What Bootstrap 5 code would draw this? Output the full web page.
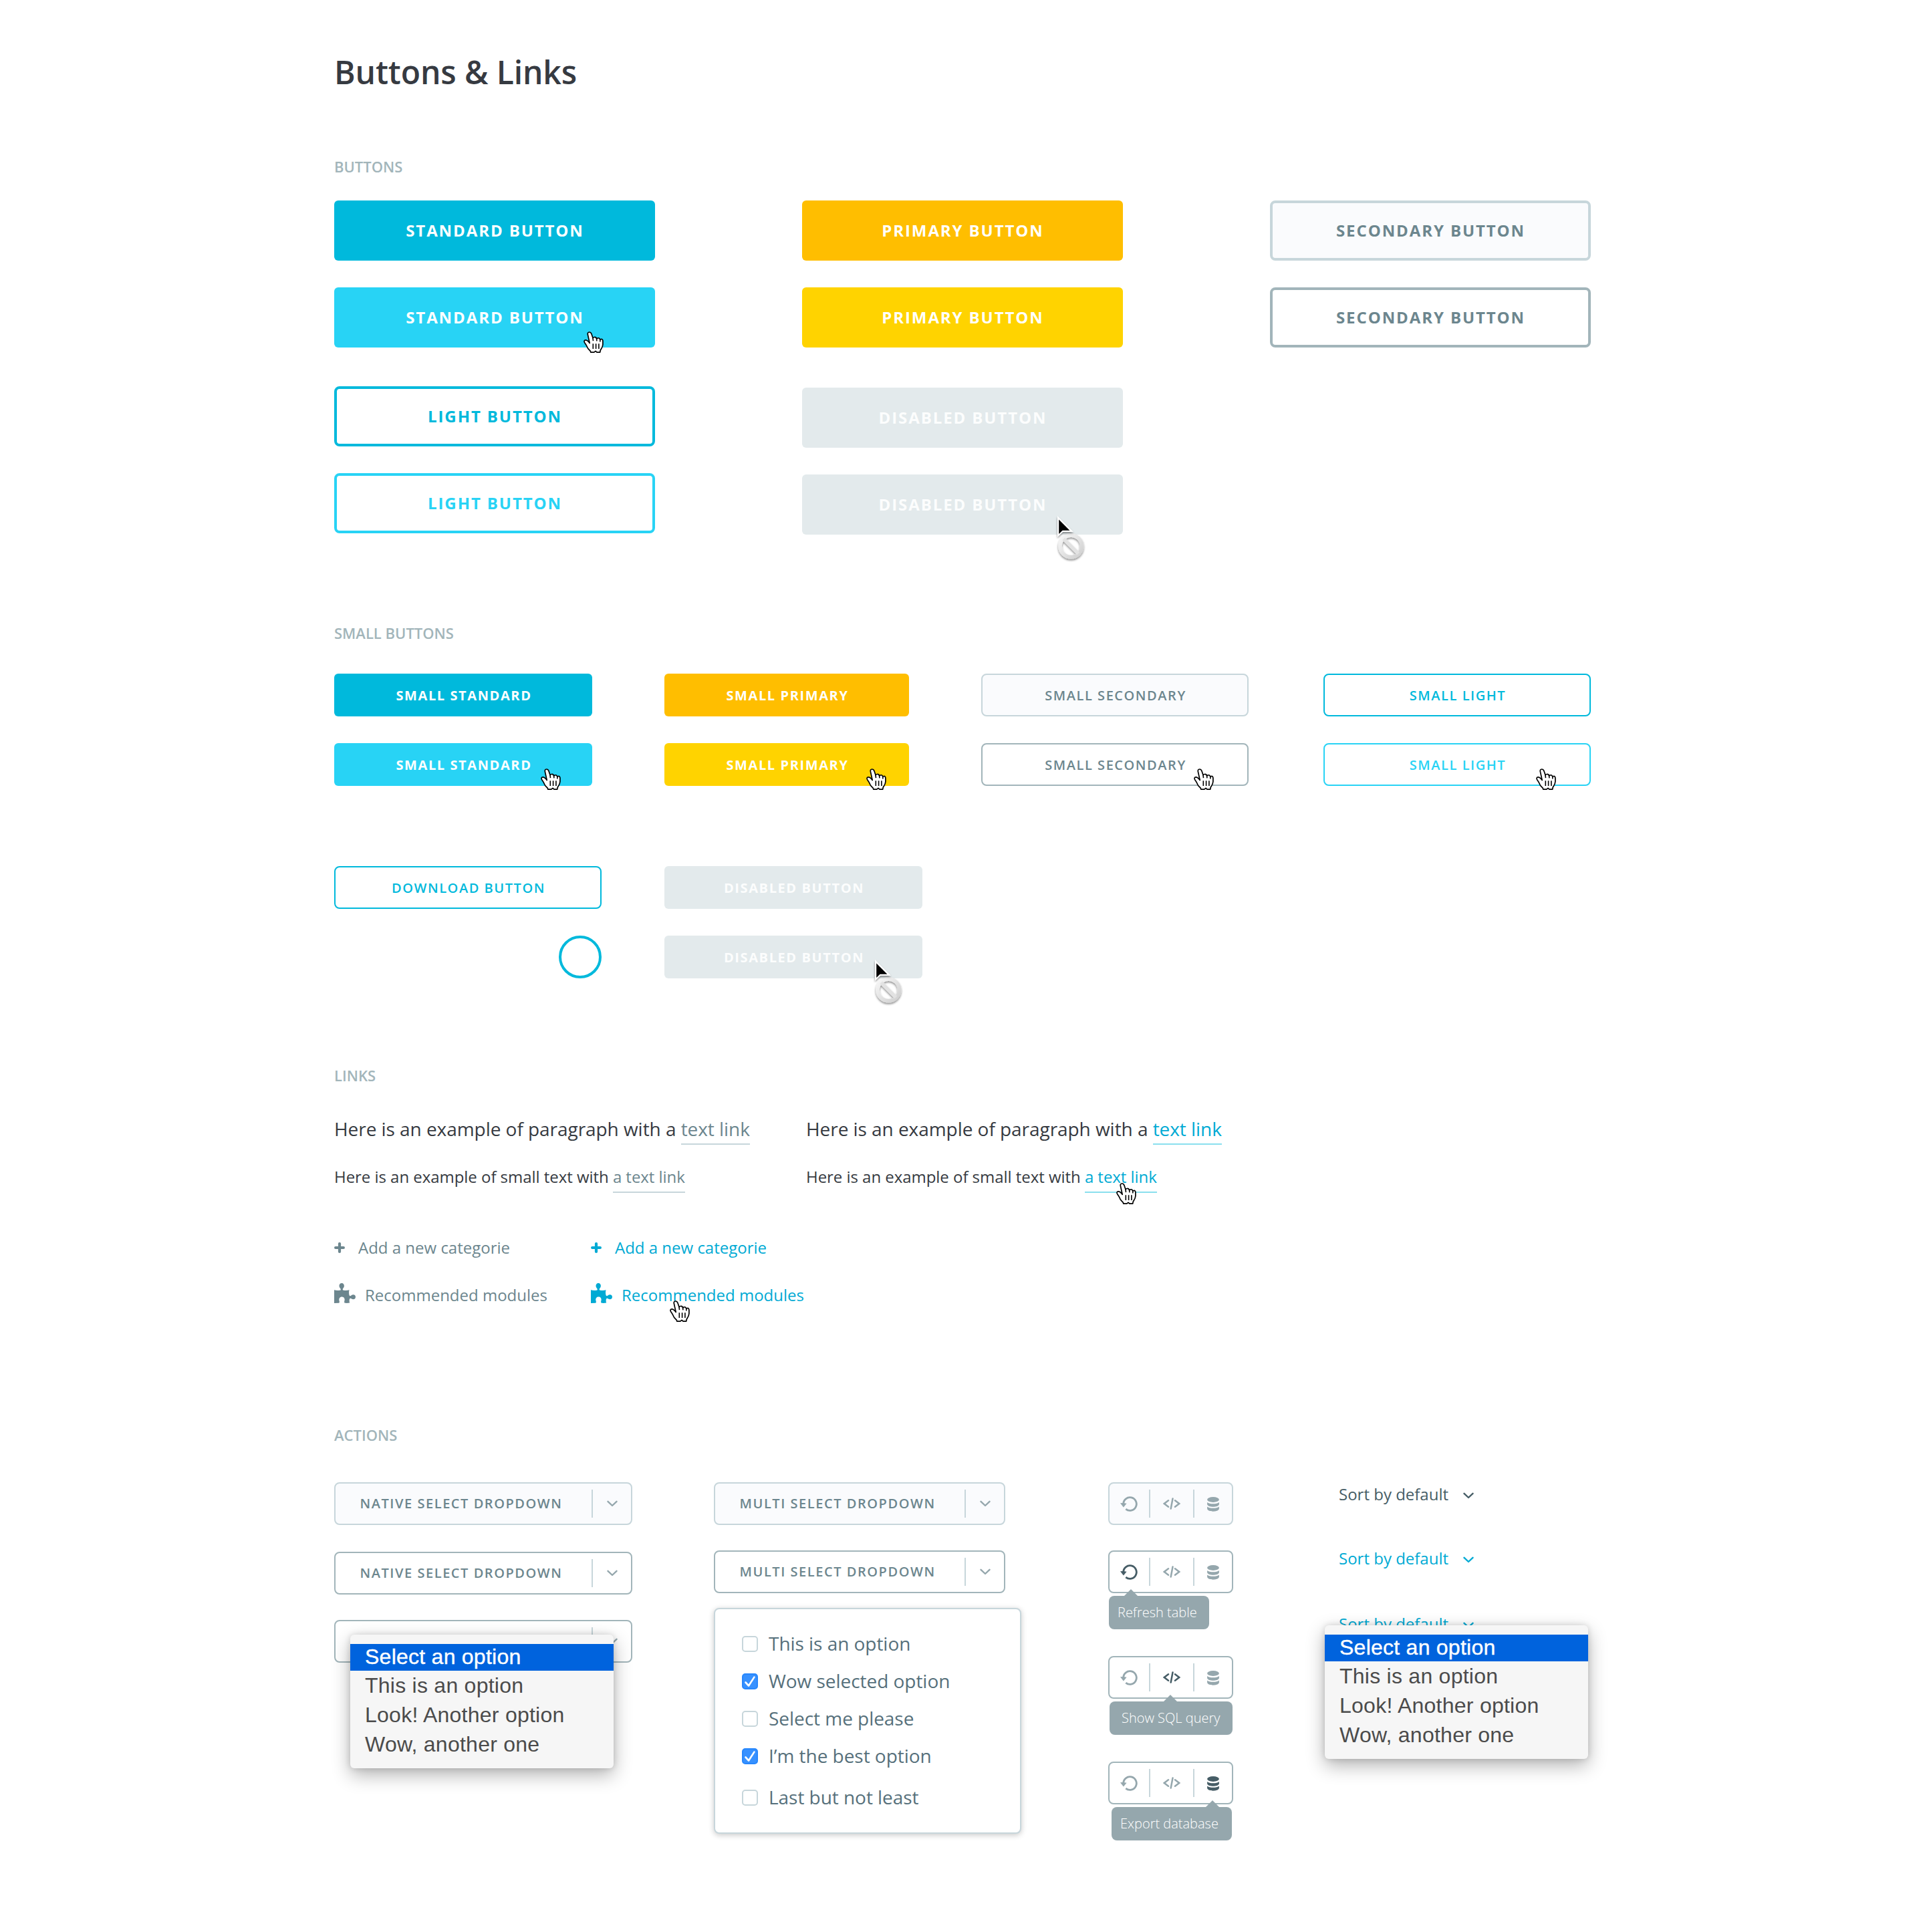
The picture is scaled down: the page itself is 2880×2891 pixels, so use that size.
<!DOCTYPE html>
<html lang="en">
<head>
<meta charset="utf-8">
<meta name="viewport" content="width=device-width, initial-scale=1">
<title>Buttons &amp; Links</title>
<link href="https://cdn.jsdelivr.net/npm/bootstrap@5.3.0/dist/css/bootstrap.min.css" rel="stylesheet">
<style>
  :root {
    --kit-cyan: #00b9dc; --kit-cyan-hover: #28d3f5;
    --kit-yellow: #ffbe00; --kit-yellow-hover: #ffd300;
    --kit-slate: #6c868e; --kit-line: #c7d6db; --kit-line-hover: #a2b5ba;
    --kit-pale: #fafbfd; --kit-link: #00aad4; --kit-ink: #363a41; --kit-dark: #465d66;
  }
  body { font-family: "Open Sans", "Noto Sans", sans-serif; color: var(--kit-ink); background: #fff; }
  .sheet { width: 1880px; min-height: 2891px; margin-left: 500px; padding-top: 76px; }
  .sheet-title { font-size: 48px; font-weight: 600; line-height: 64px; margin: 0; letter-spacing: -.1px; }
  .sheet-label { font-size: 22px; font-weight: 600; line-height: 30px; margin: 0; color: var(--kit-line-hover); text-transform: uppercase; }

  /* Buttons */
  .btn.kit {
    --bs-btn-padding-x: 0; --bs-btn-padding-y: 0; --bs-btn-border-radius: 6px; --bs-btn-border-width: 0;
    --bs-btn-font-size: 24px; --bs-btn-font-weight: 700; --bs-btn-line-height: 1;
    width: 480px; height: 90px; letter-spacing: 1.9px; text-transform: uppercase; padding-left: 1px;
    display: flex; align-items: center; justify-content: center; position: relative;
  }
  .btn.kit-sm { --bs-btn-font-size: 20px; width: 386px; height: 64px; letter-spacing: 1.6px; padding: 2px 0 0 2px; }
  .btn.kit-sm.narrow { width: 366px; }
  .btn.outlined { --bs-btn-border-width: 4px; --bs-btn-border-radius: 8px; }
  .btn.kit-sm.outlined { --bs-btn-border-width: 2px; --bs-btn-font-weight: 600; width: 400px; letter-spacing: 1.55px; }
  .fill-cyan, .fill-cyan:hover { background: var(--kit-cyan); color: #fff; }
  .fill-cyan.on { background: var(--kit-cyan-hover); }
  .fill-yellow, .fill-yellow:hover { background: var(--kit-yellow); color: #fff; }
  .fill-yellow.on { background: var(--kit-yellow-hover); }
  .fill-off, .fill-off:hover { background: #e3eaec; color: #fcfdfd; cursor: not-allowed; }
  .line-slate { background: var(--kit-pale); color: var(--kit-slate); border-color: var(--kit-line); }
  .line-slate.on { background: #fff; border-color: var(--kit-line-hover); }
  .line-cyan { background: #fff; color: var(--kit-cyan); border-color: var(--kit-cyan); }
  .line-cyan.on { color: var(--kit-cyan-hover); border-color: var(--kit-cyan-hover); }
  .ring { width: 64px; height: 64px; border: 4px solid var(--kit-cyan); }
  .stack { display: flex; flex-direction: column; gap: 40px; }

  /* Pointers lying over the controls */
  .pointer { position: absolute; overflow: visible; pointer-events: none; }
  .hand { width: 30px; height: 32px; }
  .denied { width: 42px; height: 68px; }

  /* Links */
  .para { font-size: 28px; line-height: 40px; margin: 0; letter-spacing: -.05px; }
  .para-sm { font-size: 24px; line-height: 40px; margin: 32px 0 0; letter-spacing: -.04px; }
  .para a, .para-sm a { color: var(--kit-slate); text-decoration: none; border-bottom: 2px solid var(--kit-line); padding-bottom: 3px; }
  .para-sm a { padding-bottom: 6px; position: relative; }
  .lit .para a, .lit .para-sm a { color: var(--kit-link); border-color: #8adfee; }
  .icon-row { display: flex; align-items: center; height: 40px; font-size: 24px; line-height: 40px; color: var(--kit-slate); text-decoration: none; position: relative; }
  .icon-row.on { color: var(--kit-link); }
  .icon-row .lower { padding-top: 1px; }
  .link-col { width: 384px; display: flex; flex-direction: column; gap: 32px; }

  /* Actions */
  .picker { height: 64px; display: flex; align-items: center; border: 2px solid var(--kit-line); border-radius: 8px; background: var(--kit-pale); color: var(--kit-slate); font-size: 20px; font-weight: 600; letter-spacing: 1.55px; line-height: 1; text-transform: uppercase; padding: 0; }
  .picker.on { background: #fff; border-color: var(--kit-line-hover); }
  .picker .caption { flex: 1; text-align: left; padding-left: 36.5px; }
  .rule { width: 2px; height: 42px; background: var(--kit-line); flex: none; }
  .picker .arrow { width: 57px; display: flex; justify-content: center; color: #95a7ad; }
  .chev { width: 16px; height: 10px; display: block; }
  .native-menu { position: absolute; width: 394px; height: 200px; padding: 14px 0 0; margin: 0; background: #f6f6f6; border-radius: 6px; box-shadow: 0 10px 28px rgba(0,0,0,.3), 0 0 10px rgba(0,0,0,.14); font-family: "Liberation Sans", Arial, sans-serif; font-size: 32px; font-weight: 400; letter-spacing: .25px; text-transform: none; color: #4b4b4b; list-style: none; z-index: 3; }
  .native-menu li { height: 44px; line-height: 41px; padding-left: 22px; }
  .native-menu li.chosen { height: 40px; line-height: 38px; margin-bottom: 2px; background: #0063dd; color: #fff; -webkit-text-stroke: .4px #fff; }
  .check-panel { width: 460px; height: 338px; margin-top: 22px; border: 2px solid var(--kit-line); border-radius: 8px; background: #fff; box-shadow: 0 2px 8px rgba(0,0,0,.22); padding: 32px 0 0 40px; }
  .check-panel .form-check { display: flex; align-items: center; height: 40px; min-height: 0; margin: 0 0 16px; padding: 0; font-size: 28px; line-height: 38px; letter-spacing: -.04px; color: #56707b; }
  .check-panel .form-check span { padding-bottom: 2px; }
  .check-panel .form-check:nth-child(4) { margin-bottom: 22px; }
  .check-panel .form-check-input { width: 24px; height: 24px; margin: 0 16px 0 0; float: none; border: 2px solid var(--kit-line); border-radius: 5px; }
  .check-panel .form-check-input:checked { background-color: #3791ff; border-color: #2787fd; background-size: 24px 24px; background-origin: border-box; background-image: url("data:image/svg+xml,%3csvg xmlns='http://www.w3.org/2000/svg' viewBox='0 0 24 24'%3e%3cpath fill='none' stroke='%23fff' stroke-width='2.6' stroke-linecap='round' stroke-linejoin='round' d='M5.5 13.5l4.6 5L18.4 5.6'/%3e%3c/svg%3e"); }
  .tools { width: 187px; height: 64px; border: 2px solid var(--kit-line); border-radius: 8px; background: var(--kit-pale); display: flex; align-items: center; color: #95a7ad; position: relative; }
  .tools.on { background: #fff; border-color: var(--kit-line-hover); }
  .tools .cell { display: flex; justify-content: center; flex: none; }
  .tools .cell:nth-child(1) { width: 58px; margin-right: 1px; }
  .tools .cell:nth-child(3) { width: 64px; }
  .tools .cell:nth-child(5) { width: 55px; padding-top: 2px; }
  .tools .hot { color: var(--kit-dark); }
  .tip { position: absolute; top: 68px; height: 50px; line-height: 49px; border-radius: 8px; background: #95a7ad; color: #fff; font-size: 20px; font-weight: 300; white-space: nowrap; z-index: 2; }
  .tip::before { content: ""; position: absolute; top: -10px; left: var(--tip-x); border: solid transparent; border-width: 0 10px 10px; border-bottom-color: #95a7ad; }
  .tip-a { left: -1px; width: 150px; padding-left: 13px; --tip-x: 22.5px; }
  .tip-b { left: 0; width: 184px; padding-left: 18px; --tip-x: 81px; }
  .tip-c { left: 3px; width: 180px; padding-left: 13px; --tip-x: 141px; }
  .sorter { display: flex; align-items: center; gap: 22px; height: 40px; font-size: 24px; line-height: 40px; color: var(--kit-dark); }
  .sorter.on { color: var(--kit-link); }
</style>
<script src="https://cdn.jsdelivr.net/npm/bootstrap@5.3.0/dist/js/bootstrap.bundle.min.js"></script>
</head>
<body>
<svg width="0" height="0" class="position-absolute" aria-hidden="true">
  <defs>
    <linearGradient id="metal" x1="0" y1="0" x2="1" y2="1"><stop offset="0" stop-color="#f7f7f7"/><stop offset="1" stop-color="#cfcfcf"/></linearGradient>
    <filter id="drop" x="-40%" y="-40%" width="180%" height="190%"><feDropShadow dx="0" dy="2" stdDeviation="1.5" flood-color="#000" flood-opacity=".45"/></filter>
    <symbol id="i-hand" viewBox="0 0 30 32" overflow="visible">
      <path fill="#fff" stroke="#000" stroke-width="1.7" stroke-linejoin="round" d="M8.6 1C6.600 1 5.900 2.700 6.400 4.800L9.200 17.400C7.400 15 5.200 12.800 3 12.900C1 13 .6 14.800 1.500 16.400C3.300 18.800 4.900 21.500 6 24.300C7 26.400 9 28 10.400 29.600L10.700 31.200H15.800L18 29.300L20 31.200H24.700L25.200 28.300C26.200 26.200 28.700 24 28.900 19.500V14.200C28.900 12.200 27.700 11.300 26.300 11.500C25.500 11.600 25 12 24.800 12.600C24.500 10.600 23.100 9.600 21.600 9.800C20.600 9.900 20 10.300 19.600 11.100C19.100 9.200 17.800 8.300 16.200 8.500C15 8.600 14.400 9.100 14 9.800L11.900 3.600C11.300 2 10.400 1 8.600 1Z"/>
      <path stroke="#000" stroke-width="1.6" d="M14.300 18.300V26M18.600 18.300V26M22.900 18.300V26M14 9.800L14.500 14.200M19.600 11.100L19.900 14.400M24.800 12.600V15.400" fill="none"/>
    </symbol>
    <symbol id="i-denied" viewBox="0 0 42 68" overflow="visible">
      <g filter="url(#drop)" fill="none" stroke="url(#metal)">
        <circle cx="20.300" cy="45.300" r="16.300" stroke-width="5.800"/>
        <path stroke="#e2e2e2" stroke-width="5.400" d="M9.300 34.300L31.300 56.300"/>
      </g>
      <g filter="url(#drop)"><path fill="#fff" d="M0 0V31.500L8 24H24Z"/></g>
      <path fill="#000" d="M2.200 5.400V27L7.600 21.700H18.400Z"/>
    </symbol>
    <symbol id="i-chev" viewBox="0 0 16 10"><path fill="none" stroke="currentColor" stroke-width="2.400" stroke-linecap="round" stroke-linejoin="round" d="M1.500 1.800L8 8L14.500 1.800"/></symbol>
    <symbol id="i-plus" viewBox="0 0 16 16"><path fill="none" stroke="currentColor" stroke-width="4.200" stroke-linecap="round" stroke-linejoin="round" d="M8 2.100V13.900M2.100 8H13.900"/></symbol>
    <symbol id="i-puzzle" viewBox="0 0 32 30"><path fill="currentColor" d="M0 10.300C3 11.300 6 11 8.600 10.800C10.300 10.500 9.800 9 9.200 8C8.100 6.900 7.500 5.500 7.500 4C7.500 1.800 9 0 11.200 0C13.400 0 14.900 1.800 14.900 4C14.900 5.500 14.300 6.900 13.200 8C12.600 9 12.300 10.500 13.900 10.800C16.500 11 20 11.300 22.500 10.300C21.800 13 21.900 16.500 22.700 18.500C23.400 19.700 24.800 19.300 26 18C28.200 16.500 32 17.200 32 20.800C32 24.400 28.200 25 26 23.600C24.800 22.500 23.500 22.500 22.900 23.900C22.400 26 22.600 28 23.200 29.600C20.800 30 18 30 15.700 29.800C14.900 28.500 15 27.500 15.500 26C16.200 22.500 14 20.500 11.500 20.500C9 20.500 6.700 22.500 7.400 26C7.900 27.500 8.200 28.500 7.300 29.800L0 30Z"/></symbol>
    <symbol id="i-refresh" viewBox="0 0 26 23"><path fill="none" stroke="currentColor" stroke-width="2.800" d="M4.700 11.500A9.800 9.800 0 1 1 8.300 19.100"/><path fill="currentColor" d="M0 10.300L4.600 10L9.600 10.800L4.900 16.500Z"/></symbol>
    <symbol id="i-code" viewBox="0 0 26 18"><path fill="none" stroke="currentColor" stroke-width="2.500" stroke-linecap="round" d="M8 4.300L1.800 9L8 13.700M18 4.300L24.200 9L18 13.700M14.500 1.400L11.700 16.600"/></symbol>
    <symbol id="i-data" viewBox="0 0 18 22"><ellipse cx="9" cy="4" rx="8.900" ry="3.900" fill="currentColor"/><path fill="currentColor" d="M.1 8C3 11.100 15 11.100 17.900 8V11.300C16.500 16 1.500 16 .1 11.300ZM.1 14.400C3 17.500 15 17.500 17.900 14.400V17.800C16.500 23 1.500 23 .1 17.800Z"/></symbol>
  </defs>
</svg>

<main class="sheet">
  <h1 class="sheet-title">Buttons &amp; Links</h1>

  <section style="margin-top:94px">
    <h2 class="sheet-label">Buttons</h2>
    <div class="d-flex justify-content-between" style="margin-top:36px">
      <div>
        <div class="stack">
          <button class="btn kit fill-cyan">Standard button</button>
          <button class="btn kit fill-cyan on">Standard button<svg class="pointer hand" style="left:372.500px;top:66px"><use href="#i-hand"/></svg></button>
        </div>
        <div class="stack" style="margin-top:58px">
          <button class="btn kit outlined line-cyan">Light button</button>
          <button class="btn kit outlined line-cyan on">Light button</button>
        </div>
      </div>
      <div>
        <div class="stack">
          <button class="btn kit fill-yellow">Primary button</button>
          <button class="btn kit fill-yellow on">Primary button</button>
        </div>
        <div class="stack" style="margin-top:60px">
          <button class="btn kit fill-off">Disabled button</button>
          <button class="btn kit fill-off">Disabled button<svg class="pointer denied" style="left:382px;top:62px"><use href="#i-denied"/></svg></button>
        </div>
      </div>
      <div class="stack">
        <button class="btn kit outlined line-slate">Secondary button</button>
        <button class="btn kit outlined line-slate on">Secondary button</button>
      </div>
    </div>
  </section>

  <section style="margin-top:132px">
    <h2 class="sheet-label">Small buttons</h2>
    <div class="d-flex" style="margin-top:46px">
      <div class="stack" style="margin-right:108px">
        <button class="btn kit kit-sm fill-cyan">Small standard</button>
        <button class="btn kit kit-sm fill-cyan on">Small standard<svg class="pointer hand" style="left:308.500px;top:38px"><use href="#i-hand"/></svg></button>
      </div>
      <div class="stack" style="margin-right:108px">
        <button class="btn kit kit-sm narrow fill-yellow">Small primary</button>
        <button class="btn kit kit-sm narrow fill-yellow on">Small primary<svg class="pointer hand" style="left:302px;top:38px"><use href="#i-hand"/></svg></button>
      </div>
      <div class="stack" style="margin-right:112px">
        <button class="btn kit kit-sm outlined line-slate">Small secondary</button>
        <button class="btn kit kit-sm outlined line-slate on">Small secondary<svg class="pointer hand" style="left:316px;top:36px"><use href="#i-hand"/></svg></button>
      </div>
      <div class="stack">
        <button class="btn kit kit-sm outlined line-cyan">Small light</button>
        <button class="btn kit kit-sm outlined line-cyan on">Small light<svg class="pointer hand" style="left:316px;top:36px"><use href="#i-hand"/></svg></button>
      </div>
    </div>
    <div class="d-flex" style="margin-top:120px">
      <div class="stack align-items-end" style="margin-right:94px">
        <button class="btn kit kit-sm outlined line-cyan">Download button</button>
        <div class="ring rounded-circle"></div>
      </div>
      <div class="stack">
        <button class="btn kit kit-sm fill-off">Disabled button</button>
        <button class="btn kit kit-sm fill-off">Disabled button<svg class="pointer denied" style="left:315px;top:36px"><use href="#i-denied"/></svg></button>
      </div>
    </div>
  </section>

  <section style="margin-top:130px">
    <h2 class="sheet-label">Links</h2>
    <div class="d-flex" style="margin-top:45px">
      <div style="width:706px">
        <p class="para">Here is an example of paragraph with a <a href="#">text link</a></p>
        <p class="para-sm">Here is an example of small text with <a href="#">a text link</a></p>
      </div>
      <div class="lit">
        <p class="para">Here is an example of paragraph with a <a href="#">text link</a></p>
        <p class="para-sm">Here is an example of small text with <a href="#">a text link<svg class="pointer hand" style="left:47px;top:26px"><use href="#i-hand"/></svg></a></p>
      </div>
    </div>
    <div class="d-flex" style="margin-top:65px">
      <div class="link-col">
        <a href="#" class="icon-row"><svg width="16" height="16" style="margin:1px 20px 0 0"><use href="#i-plus"/></svg><span class="lower">Add a new categorie</span></a>
        <a href="#" class="icon-row"><svg width="32" height="30" style="margin:-6px 14px 0 0"><use href="#i-puzzle"/></svg>Recommended modules</a>
      </div>
      <div class="link-col">
        <a href="#" class="icon-row on"><svg width="16" height="16" style="margin:1px 20px 0 0"><use href="#i-plus"/></svg><span class="lower">Add a new categorie</span></a>
        <a href="#" class="icon-row on"><svg width="32" height="30" style="margin:-6px 14px 0 0"><use href="#i-puzzle"/></svg>Recommended modules<svg class="pointer hand" style="left:118px;top:28px"><use href="#i-hand"/></svg></a>
      </div>
    </div>
  </section>

  <section style="margin-top:174px">
    <h2 class="sheet-label">Actions</h2>
    <div class="d-flex align-items-start" style="margin-top:56px">
      <div class="d-flex flex-column" style="width:446px;margin-right:122px">
        <div class="picker"><span class="caption">Native select dropdown</span><span class="rule"></span><span class="arrow"><svg class="chev"><use href="#i-chev"/></svg></span></div>
        <div class="picker on" style="margin-top:40px"><span class="caption">Native select dropdown</span><span class="rule"></span><span class="arrow"><svg class="chev"><use href="#i-chev"/></svg></span></div>
        <div class="picker on position-relative" style="margin-top:38px"><span class="caption"></span><span class="rule"></span><span class="arrow"><svg class="chev"><use href="#i-chev"/></svg></span>
          <ul class="native-menu" style="left:22px;top:20px">
            <li class="chosen">Select an option</li><li>This is an option</li><li>Look! Another option</li><li>Wow, another one</li>
          </ul>
        </div>
      </div>
      <div style="width:460px;margin-right:130px">
        <div class="picker" style="width:436px"><span class="caption">Multi select dropdown</span><span class="rule"></span><span class="arrow"><svg class="chev"><use href="#i-chev"/></svg></span></div>
        <div class="picker on" style="width:436px;margin-top:38px"><span class="caption">Multi select dropdown</span><span class="rule"></span><span class="arrow"><svg class="chev"><use href="#i-chev"/></svg></span></div>
        <div class="check-panel">
          <label class="form-check"><input class="form-check-input" type="checkbox"><span>This is an option</span></label>
          <label class="form-check"><input class="form-check-input" type="checkbox" checked><span>Wow selected option</span></label>
          <label class="form-check"><input class="form-check-input" type="checkbox"><span>Select me please</span></label>
          <label class="form-check"><input class="form-check-input" type="checkbox" checked><span>I’m the best option</span></label>
          <label class="form-check"><input class="form-check-input" type="checkbox"><span>Last but not least</span></label>
        </div>
      </div>
      <div class="d-flex flex-column" style="width:187px;margin-right:159px">
        <div class="tools">
          <span class="cell"><svg width="26" height="23"><use href="#i-refresh"/></svg></span><span class="rule"></span>
          <span class="cell"><svg width="26" height="18"><use href="#i-code"/></svg></span><span class="rule"></span>
          <span class="cell"><svg width="18" height="22"><use href="#i-data"/></svg></span>
        </div>
        <div class="tools on" style="margin-top:38px">
          <span class="cell hot"><svg width="26" height="23"><use href="#i-refresh"/></svg></span><span class="rule"></span>
          <span class="cell"><svg width="26" height="18"><use href="#i-code"/></svg></span><span class="rule"></span>
          <span class="cell"><svg width="18" height="22"><use href="#i-data"/></svg></span>
          <span class="tip tip-a" style="top:66px">Refresh table</span>
        </div>
        <div class="tools on" style="margin-top:94px">
          <span class="cell"><svg width="26" height="23"><use href="#i-refresh"/></svg></span><span class="rule"></span>
          <span class="cell hot"><svg width="26" height="18"><use href="#i-code"/></svg></span><span class="rule"></span>
          <span class="cell"><svg width="18" height="22"><use href="#i-data"/></svg></span>
          <span class="tip tip-b" style="top:66px">Show SQL query</span>
        </div>
        <div class="tools on" style="margin-top:94px">
          <span class="cell"><svg width="26" height="23"><use href="#i-refresh"/></svg></span><span class="rule"></span>
          <span class="cell"><svg width="26" height="18"><use href="#i-code"/></svg></span><span class="rule"></span>
          <span class="cell hot"><svg width="18" height="22"><use href="#i-data"/></svg></span>
          <span class="tip tip-c" style="top:66px">Export database</span>
        </div>
      </div>
      <div class="position-relative" style="margin-top:-2px;margin-left:-1px">
        <div class="sorter">Sort by default<svg class="chev mt-1"><use href="#i-chev"/></svg></div>
        <div class="sorter on" style="margin-top:56px">Sort by default<svg class="chev mt-1"><use href="#i-chev"/></svg></div>
        <div class="sorter on" style="margin-top:58px">Sort by default<svg class="chev mt-1"><use href="#i-chev"/></svg></div>
        <ul class="native-menu" style="left:-21px;top:216px">
          <li class="chosen">Select an option</li><li>This is an option</li><li>Look! Another option</li><li>Wow, another one</li>
        </ul>
      </div>
    </div>
  </section>
</main>
</body>
</html>
